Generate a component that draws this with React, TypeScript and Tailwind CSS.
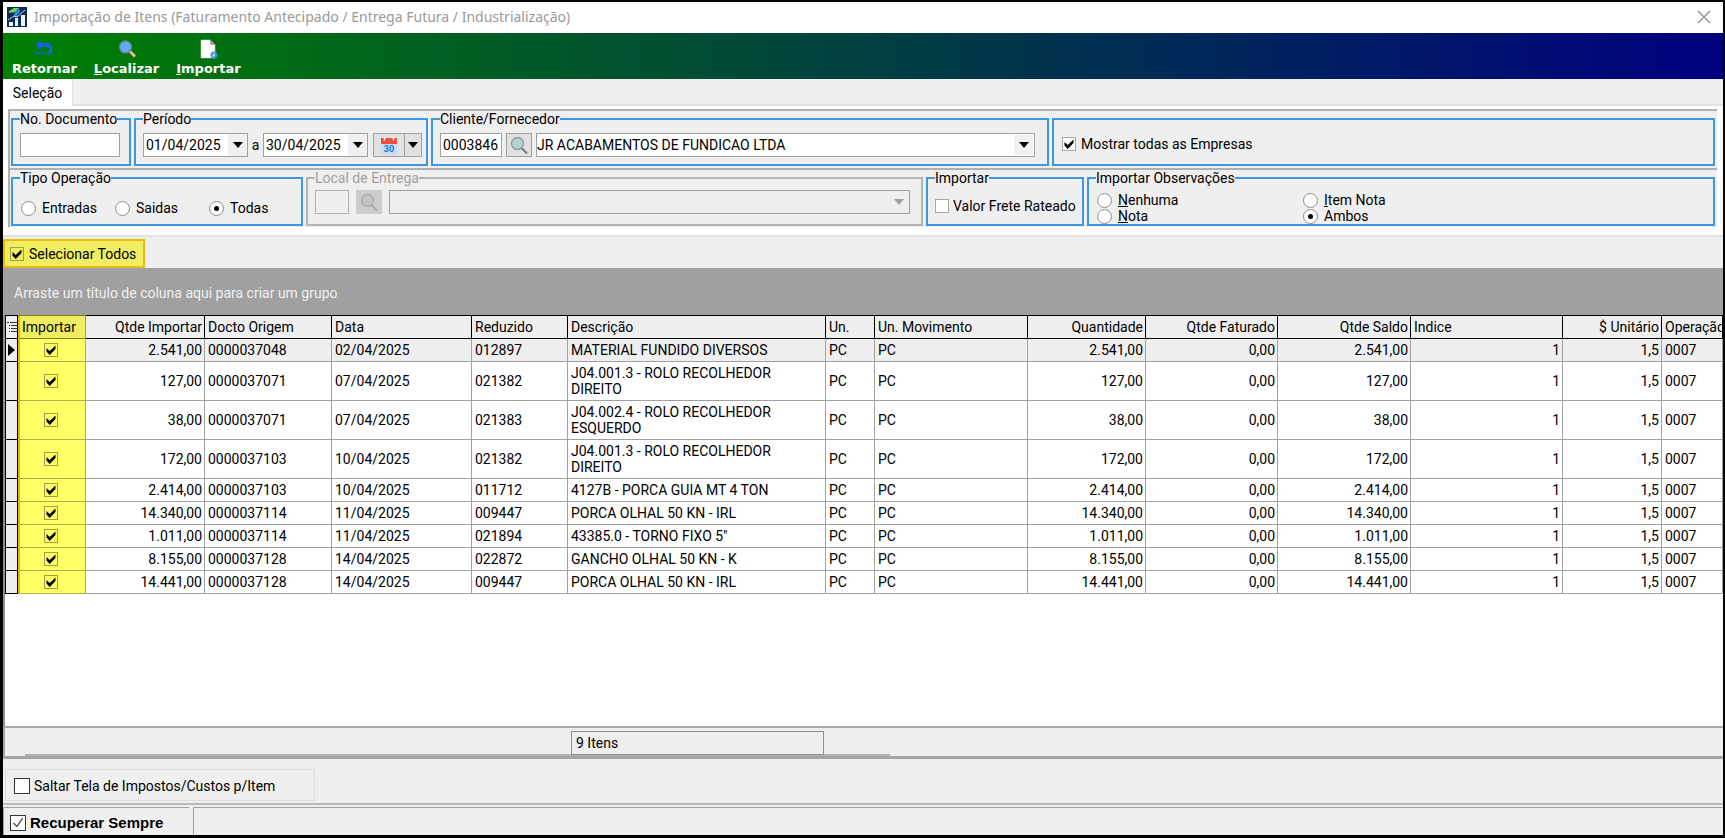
import React from "react";

const columns = [
  { label: "Importar", width: "w-[68px]", align: "text-left" },
  { label: "Qtde Importar", width: "w-[119px]", align: "text-right" },
  { label: "Docto Origem", width: "w-[127px]", align: "text-left" },
  { label: "Data", width: "w-[140px]", align: "text-left" },
  { label: "Reduzido", width: "w-24", align: "text-left" },
  { label: "Descrição", width: "w-[258px]", align: "text-left" },
  { label: "Un.", width: "w-[49px]", align: "text-left" },
  { label: "Un. Movimento", width: "w-[153px]", align: "text-left" },
  { label: "Quantidade", width: "w-[118px]", align: "text-right" },
  { label: "Qtde Faturado", width: "w-[132px]", align: "text-right" },
  { label: "Qtde Saldo", width: "w-[133px]", align: "text-right" },
  { label: "Indice", width: "w-[152px]", align: "text-left" },
  { label: "$ Unitário", width: "w-[99px]", align: "text-right" },
  { label: "Operação", width: "w-auto", align: "text-left" },
];

const items = [
  { qtde: "2.541,00", docto: "0000037048", data: "02/04/2025", reduzido: "012897", descricao: ["MATERIAL FUNDIDO DIVERSOS"] },
  { qtde: "127,00", docto: "0000037071", data: "07/04/2025", reduzido: "021382", descricao: ["J04.001.3 - ROLO RECOLHEDOR", "DIREITO"] },
  { qtde: "38,00", docto: "0000037071", data: "07/04/2025", reduzido: "021383", descricao: ["J04.002.4 - ROLO RECOLHEDOR", "ESQUERDO"] },
  { qtde: "172,00", docto: "0000037103", data: "10/04/2025", reduzido: "021382", descricao: ["J04.001.3 - ROLO RECOLHEDOR", "DIREITO"] },
  { qtde: "2.414,00", docto: "0000037103", data: "10/04/2025", reduzido: "011712", descricao: ["4127B - PORCA GUIA MT 4 TON"] },
  { qtde: "14.340,00", docto: "0000037114", data: "11/04/2025", reduzido: "009447", descricao: ["PORCA OLHAL 50 KN - IRL"] },
  { qtde: "1.011,00", docto: "0000037114", data: "11/04/2025", reduzido: "021894", descricao: ["43385.0 - TORNO FIXO 5''"] },
  { qtde: "8.155,00", docto: "0000037128", data: "14/04/2025", reduzido: "022872", descricao: ["GANCHO OLHAL 50 KN - K"] },
  { qtde: "14.441,00", docto: "0000037128", data: "14/04/2025", reduzido: "009447", descricao: ["PORCA OLHAL 50 KN - IRL"] },
];

interface CheckProps {
  checked?: boolean;
  box?: string;
  thin?: boolean;
  label?: string;
}

const Check: React.FC<CheckProps> = ({ checked, box = "size-[14px] border-[#a8a8a8] bg-white", thin, label }) => (
  <span className="relative inline-flex shrink-0">
    <input type="checkbox" defaultChecked={checked} aria-label={label} className={`peer appearance-none border ${box}`} />
    <svg viewBox="0 0 14 14" className="pointer-events-none absolute inset-0 hidden size-full peer-checked:block">
      {thin ? (
        <path d="M3 7l3 3 5-7" fill="none" stroke="#555" strokeWidth="1.2" />
      ) : (
        <path d="M2.500 5v3.500L5.700 12 11.500 6V2.500L5.700 8z" fill="#000" />
      )}
    </svg>
  </span>
);

const Radio = ({ name, checked, children }: { name: string; checked?: boolean; children: React.ReactNode }) => (
  <label className="flex items-center gap-1.5">
    <span className="relative inline-flex">
      <input type="radio" name={name} defaultChecked={checked} className="peer size-[15px] appearance-none rounded-full border border-[#8c8c8c] bg-white" />
      <span className="pointer-events-none absolute inset-[5px] hidden rounded-full bg-black peer-checked:block" />
    </span>
    <span>{children}</span>
  </label>
);

const Arrow = ({ color = "#000" }: { color?: string }) => (
  <svg width="10" height="6" viewBox="0 0 10 6" className="shrink-0">
    <path d="M0 0h10L5 6z" fill={color} />
  </svg>
);

const Group = ({ title, className, disabled, children }: { title: string; className: string; disabled?: boolean; children: React.ReactNode }) => (
  <fieldset
    disabled={disabled}
    className={`min-w-0 border-2 pr-1 pl-[7px] ${disabled ? "border-[#b4b4b4] text-[#a0a0a0]" : "border-[#3c96e0]"} ${className}`}
  >
    <legend className="leading-4">{title}</legend>
    {children}
  </fieldset>
);

const DateBox = ({ value, label }: { value: string; label: string }) => (
  <div className="flex h-6 w-[105px] shrink-0 border border-[#a0a0a0] bg-white">
    <input aria-label={label} defaultValue={value} className="min-w-0 flex-1 pl-0.5" />
    <button aria-label="Abrir calendário" className="flex w-[19px] items-center justify-center bg-[#f0f0f0]">
      <Arrow />
    </button>
  </div>
);

const Magnifier = ({ disabled }: { disabled?: boolean }) => (
  <svg width="18" height="18" viewBox="0 0 18 18">
    <path d="M11.500 12l5 5" stroke={disabled ? "#a8a8a8" : "#6f7779"} strokeWidth="1.800" strokeLinecap="round" />
    <circle cx="7.500" cy="7.500" r="6" fill={disabled ? "#c4c4c4" : "#bcd0cf"} stroke={disabled ? "#adadad" : "#8a9a9b"} strokeWidth="1.300" />
  </svg>
);

const AppLogo = () => (
  <svg width="20" height="20" viewBox="0 0 20 20">
    <rect width="20" height="20" fill="#0b2c55" />
    <path d="M2 4l5-3 5 0-3 4-7 1z" fill="#7bd13b" />
    <path d="M9 3l3-2 1 4-5 6-1-3z" fill="#2a8be0" />
    <path d="M2 15h4v4H2zM8 11h3v8H8zM14 8h4v11h-4z" fill="#eef3f7" />
    <path d="M1 13l6-4 3 1 8-7" fill="none" stroke="#bcd8ee" />
  </svg>
);

const ReturnIcon = () => (
  <svg width="20" height="20" viewBox="0 0 20 20">
    <path d="M1 6l6-5v3h6c3 0 5.500 1.500 5.500 6s-2 6-5.500 6v-2.500c1.500 0 2-1 2-3s-.5-2.500-2-2.500H7v3z" fill="#1764cf" />
    <path d="M2.500 12.500v3M5.500 12.500v3M8.500 12.500v3M11.500 12.500v3" stroke="#1764cf" strokeWidth="1.500" />
  </svg>
);

const FindIcon = () => (
  <svg width="20" height="20" viewBox="0 0 20 20">
    <path d="M12.500 12l5.500 5.500" stroke="#f0c080" strokeWidth="2.600" />
    <circle cx="8.500" cy="8" r="6" fill="#5eadf8" stroke="#6b7f92" strokeWidth="1.300" />
  </svg>
);

const ImportIcon = () => (
  <svg width="20" height="20" viewBox="0 0 20 20">
    <path d="M3 1h10l4 4v14H3z" fill="#fff" stroke="#c8c8c8" strokeWidth=".6" />
    <path d="M13 1v4h4z" fill="#ddd" stroke="#555" />
    <circle cx="16" cy="16" r="3.500" fill="#3d8fd8" />
    <path d="M16 14v3h-2" fill="none" stroke="#fff" />
  </svg>
);

const CalendarIcon = () => (
  <svg width="16" height="17" viewBox="0 0 16 17">
    <rect y="2" width="16" height="15" fill="#c4defa" />
    <path d="M0 1h16v6H0z" fill="#ee4f3f" />
    <path d="M3.500 0v3.500M12.500 0v3.500" stroke="#fff" strokeWidth="1.500" />
    <text x="8" y="15" textAnchor="middle" fontSize="9" fontWeight="bold" fill="#1976d2">30</text>
  </svg>
);

const Toolbar = () => (
  <nav className="flex h-[46px] shrink-0 items-start gap-[17px] bg-linear-to-r/srgb from-[#008000] to-[#000080] pt-1.5 pl-[9px] font-['DejaVu_Sans'] text-[13px] leading-4 font-bold text-white">
    <button className="flex flex-col items-center gap-0.5">
      <ReturnIcon />
      <span>Retornar</span>
    </button>
    <button className="flex flex-col items-center gap-0.5">
      <FindIcon />
      <span><u>L</u>ocalizar</span>
    </button>
    <button className="flex flex-col items-center gap-0.5">
      <ImportIcon />
      <span><u>I</u>mportar</span>
    </button>
  </nav>
);

const Filters = () => (
  <section className="shrink-0 border-b-2 border-[#e2e2e2] bg-white pt-[3px] pr-1.5 pb-2 pl-[5px]">
    <div className="flex h-[59px] gap-[3px] border-t-2 border-l-2 border-[#b0b0b0] bg-[#efefef] pr-0.5 pb-0.5 pl-px">
      <Group title="No. Documento" className="w-[120px]">
        <input aria-label="No. Documento" className="mt-1.5 h-6 w-[100px] border border-[#a0a0a0] bg-white px-1" />
      </Group>
      <Group title="Período" className="w-[294px]">
        <div className="mt-1.5 flex items-center">
          <DateBox value="01/04/2025" label="Data inicial" />
          <span className="w-[15px] text-center">a</span>
          <DateBox value="30/04/2025" label="Data final" />
          <button aria-label="Período" className="ml-[5px] flex h-6 w-8 items-center justify-center border border-[#a0a0a0] bg-[#e1e1e1]">
            <CalendarIcon />
          </button>
          <button aria-label="Opções de período" className="flex h-6 w-[17px] items-center justify-center border border-l-0 border-[#a0a0a0] bg-[#e1e1e1]">
            <Arrow />
          </button>
        </div>
      </Group>
      <Group title="Cliente/Fornecedor" className="w-[618px]">
        <div className="mt-1.5 flex items-center gap-1 pr-2">
          <input aria-label="Código" defaultValue="0003846" className="h-6 w-[62px] border border-[#a0a0a0] bg-white pl-0.5" />
          <button aria-label="Pesquisar" className="flex h-6 w-[26px] items-center justify-center border border-[#a0a0a0] bg-[#e1e1e1]">
            <Magnifier />
          </button>
          <div className="relative flex-1">
            <select aria-label="Cliente/Fornecedor" className="block h-6 w-full appearance-none border border-[#a0a0a0] bg-white">
              <option>JR ACABAMENTOS DE FUNDICAO LTDA</option>
            </select>
            <span className="pointer-events-none absolute inset-y-0.5 right-0.5 flex w-[19px] items-center justify-center bg-[#f0f0f0]">
              <Arrow />
            </span>
          </div>
        </div>
      </Group>
      <div className="mt-[7px] flex flex-1 items-center border-2 border-[#3c96e0] px-2">
        <label className="flex items-center gap-[5px] pt-1">
          <Check checked />
          Mostrar todas as Empresas
        </label>
      </div>
    </div>

    <div className="flex h-[59px] gap-[3px] border-t-2 border-l-2 border-[#b0b0b0] bg-[#efefef] pr-0.5 pb-px pl-px">
      <Group title="Tipo Operação" className="w-[292px]">
        <div className="mt-3 grid grid-cols-[94px_94px_auto] pl-px">
          <Radio name="tipo">Entradas</Radio>
          <Radio name="tipo">Saidas</Radio>
          <Radio name="tipo" checked>Todas</Radio>
        </div>
      </Group>
      <Group title="Local de Entrega" className="w-[617px]" disabled>
        <div className="mt-1 flex items-center gap-[7px] pr-[7px]">
          <input aria-label="Código do local" className="h-6 w-[34px] border border-[#b0b0b0]" />
          <button aria-label="Pesquisar local" className="flex h-6 w-[26px] items-center justify-center bg-[#cccccc]">
            <Magnifier disabled />
          </button>
          <div className="relative flex-1">
            <select aria-label="Local de Entrega" className="block h-6 w-full appearance-none border border-[#a0a0a0]" />
            <span className="pointer-events-none absolute inset-y-0 right-1.5 flex items-center">
              <Arrow color="#a0a0a0" />
            </span>
          </div>
        </div>
      </Group>
      <Group title="Importar" className="w-[158px]">
        <label className="mt-2.5 flex items-center gap-1 whitespace-nowrap">
          <Check />
          Valor Frete Rateado
        </label>
      </Group>
      <Group title="Importar Observações" className="flex-1">
        <div className="mt-1.5 grid grid-cols-[206px_auto] pl-px leading-4">
          <Radio name="obs"><u>N</u>enhuma</Radio>
          <Radio name="obs"><u>I</u>tem Nota</Radio>
          <Radio name="obs"><u>N</u>ota</Radio>
          <Radio name="obs" checked>Ambos</Radio>
        </div>
      </Group>
    </div>
  </section>
);

const ItemsTable = () => (
  <table className="w-full table-fixed border-separate border-spacing-0 leading-4">
    <thead>
      <tr className="h-6 bg-[#efefef]">
        <th className="w-[13px] border-y border-r border-l border-black p-0">
          <svg width="10" height="12" viewBox="0 0 10 12" className="mx-auto">
            <path d="M0 1.500h2M3 1.500h7M2 4.500h1M4 4.500h6M2 7.500h1M4 7.500h6M2 10.500h1M4 10.500h6" stroke="#333" />
          </svg>
        </th>
        {columns.map((col, i) => (
          <th
            key={col.label}
            className={`overflow-hidden border-y border-r border-black pr-0.5 font-normal whitespace-nowrap ${col.width} ${col.align} ${
              i === 0 ? "border-l-2 border-y-[#8a7a00] border-r-[#c79a00] border-l-[#e8b400] bg-[#f0ee60] pl-0.5" : "pl-[3px]"
            }`}
          >
            {col.label}
          </th>
        ))}
      </tr>
    </thead>
    <tbody className="[&_td]:border-r [&_td]:border-b [&_td]:py-0 [&_td]:pr-0.5 [&_td]:pl-[3px]">
      {items.map((item, row) => {
        const tall = item.descricao.length > 1;
        return (
          <tr key={row} className={`${tall ? "h-[39px]" : "h-[23px]"} ${row === 0 ? "bg-[#efefef]" : "bg-white"} [&_td]:border-[#a0a0a0]`}>
            <th className="border-r border-b border-l border-black bg-[#efefef] p-0">
              {row === 0 && (
                <svg width="7" height="12" viewBox="0 0 7 12" className="mx-auto">
                  <path d="M0 0l7 6-7 6z" />
                </svg>
              )}
            </th>
            <td className="border-l-2 !border-r-[#d9a800] !border-b-[#b0ae50] !border-l-[#e8b400] bg-[#ffff66]">
              <div className="flex items-center justify-center pr-1">
                <Check checked box="size-[14px] border-[#a3a042]" label={`Importar ${item.docto}`} />
              </div>
            </td>
            <td className="text-right">{item.qtde}</td>
            <td>{item.docto}</td>
            <td>{item.data}</td>
            <td>{item.reduzido}</td>
            <td>
              {item.descricao.map((line) => (
                <div key={line} className="whitespace-nowrap">{line}</div>
              ))}
            </td>
            <td>PC</td>
            <td>PC</td>
            <td className="text-right">{item.qtde}</td>
            <td className="text-right">0,00</td>
            <td className="text-right">{item.qtde}</td>
            <td className="text-right">1</td>
            <td className="text-right">1,5</td>
            <td>0007</td>
          </tr>
        );
      })}
    </tbody>
  </table>
);

const App: React.FC = () => {
  return (
    <div className="flex min-h-screen flex-col border-t-2 border-r-2 border-b-[3px] border-l-[3px] border-black bg-[#efefef] font-[Roboto,sans-serif] text-[14px] leading-5 text-black">
      <header className="flex h-[31px] shrink-0 items-center gap-[7px] bg-white pr-3 pb-px pl-1 text-[#999999]">
        <AppLogo />
        <h1 className="flex-1 font-['Noto_Sans'] text-[14px]">
          Importação de Itens (Faturamento Antecipado / Entrega Futura / Industrialização)
        </h1>
        <button aria-label="Fechar">
          <svg width="14" height="14" viewBox="0 0 14 14">
            <path d="M1 1l12 12M13 1L1 13" stroke="#8c8c8c" strokeWidth="1.200" />
          </svg>
        </button>
      </header>

      <Toolbar />

      <div className="flex h-[27px] shrink-0">
        <button className="w-[69px] bg-white text-center">Seleção</button>
        <div className="flex-1 border-b-2 border-l border-[#e2e2e2]" />
      </div>

      <Filters />

      <div className="flex h-[31px] shrink-0 pt-0.5">
        <label className="flex w-[142px] items-center gap-[5px] border-2 border-[#e8bc10] bg-[#f0ee60] pl-[5px]">
          <Check checked box="size-[14px] border-[#a3a042]" />
          Selecionar Todos
        </label>
      </div>

      <div className="flex h-[47px] shrink-0 items-center bg-[#a0a0a0] pt-0.5 pl-[11px] text-[#f0f0f0]">
        Arraste um título de coluna aqui para criar um grupo
      </div>

      <main className="flex-1 overflow-hidden border-l-2 border-[#909090] bg-white">
        <ItemsTable />
      </main>

      <footer className="shrink-0">
        <div className="h-[33px] border-t-2 border-b-[3px] border-l-2 border-[#a6a6a6] pl-5">
          <div className="h-[28px] w-[865px] border-b-2 border-[#b0b0b0] pt-[3px] pl-[546px]">
            <output className="block h-6 w-[253px] border border-[#909090] px-1 pt-px">9 Itens</output>
          </div>
        </div>
        <div className="h-[46px] border-b-2 border-[#b8b8b8] pt-[10px] pl-0.5">
          <label className="flex h-8 w-[310px] items-center gap-1 border border-[#dddddd] pt-0.5 pl-2">
            <Check box="size-4 border-[#333333] bg-white" />
            Saltar Tela de Impostos/Custos p/Item
          </label>
        </div>
        <div className="flex h-[30px] gap-1 pt-0.5 font-['Liberation_Sans'] text-[15px] font-bold">
          <label className="flex w-[186px] items-center gap-1 border-t border-l border-[#a0a0a0] pt-0.5 pl-1.5">
            <Check checked thin box="size-4 border-[#333333] bg-white" />
            Recuperar Sempre
          </label>
          <div className="flex-1 border-t border-l border-[#a0a0a0]" />
        </div>
      </footer>
    </div>
  );
};

export default App;
